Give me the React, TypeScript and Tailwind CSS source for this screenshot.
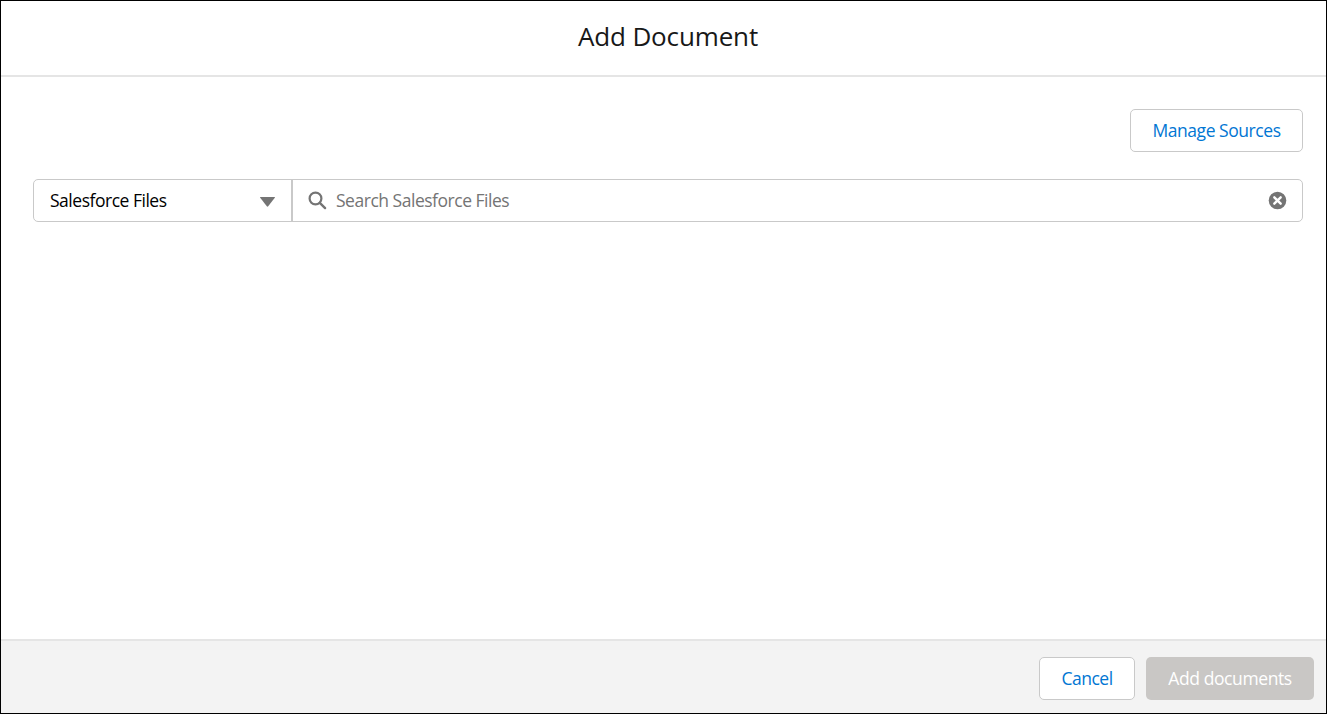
export default function App() {
  return (
    <div className="flex h-[714px] w-[1327px] flex-col border border-black bg-white font-['Open_Sans','Noto_Sans',sans-serif] text-[17.5px]">
      <header className="flex h-[76px] shrink-0 justify-center border-b-2 border-[#e5e5e5] pt-[17px] pl-[9px]">
        <h1 className="text-[26px] leading-[36px] tracking-[-0.15px] whitespace-nowrap text-[#181818]">Add Document</h1>
      </header>

      <main className="flex flex-1 flex-col pt-8 pr-[23px] pl-8">
        <button className="flex h-[43px] w-[173px] items-center justify-center self-end rounded-[5px] border border-[#c9c9c9] whitespace-nowrap text-[#0176d3]">
          <span className="tracking-[-0.45px]">Manage Sources</span>
        </button>
        <div className="mt-[27px] flex h-[43px] rounded-[5px] border border-[#c9c9c9]">
          <button className="flex w-[259px] shrink-0 items-center justify-between border-r-2 border-[#c9c9c9] pr-4 pl-4 whitespace-nowrap text-black">
            <span className="tracking-[-0.48px]">Salesforce Files</span>
            <svg className="mt-[3px] h-[10px] w-[15px]" viewBox="0 0 15 10" fill="#747474">
              <path d="M.5 0h14q.8 0 .3.7L8.2 9.3q-.7.9-1.4 0L.2.7Q-.3 0 .5 0Z" />
            </svg>
          </button>
          <div className="flex flex-1 items-center pr-[15.5px] pl-[15px]">
            <svg className="h-[19px] w-[19px]" viewBox="0 0 19 19" fill="none" stroke="#747474">
              <circle cx="7.5" cy="7.5" r="5.9" strokeWidth="2.2" />
              <path d="m11.8 11.8 5.3 5.3" strokeWidth="2.4" strokeLinecap="round" />
            </svg>
            <span className="ml-[9px] flex-1 tracking-[-0.48px] whitespace-nowrap text-[#747474]">Search Salesforce Files</span>
            <svg className="h-[19px] w-[19px]" viewBox="0 0 19 19">
              <circle cx="9.5" cy="9.5" r="8.8" fill="#747474" />
              <path d="m6.3 6.3 6.4 6.4m0-6.4-6.4 6.4" stroke="white" strokeWidth="2.4" strokeLinecap="round" />
            </svg>
          </div>
        </div>
      </main>

      <footer className="flex h-[74px] shrink-0 items-start justify-end gap-[11px] border-t-2 border-[#e5e5e5] bg-[#f3f3f3] pt-4 pr-3 whitespace-nowrap">
        <button className="flex h-[43px] w-24 items-center justify-center rounded-[5px] border border-[#c9c9c9] bg-white text-[#0176d3]">
          <span className="tracking-[-0.5px]">Cancel</span>
        </button>
        <button className="flex h-[43px] w-[168px] items-center justify-center rounded-[5px] bg-[#c9c7c5] text-white">
          <span className="tracking-[-0.4px]">Add documents</span>
        </button>
      </footer>
    </div>
  );
}
